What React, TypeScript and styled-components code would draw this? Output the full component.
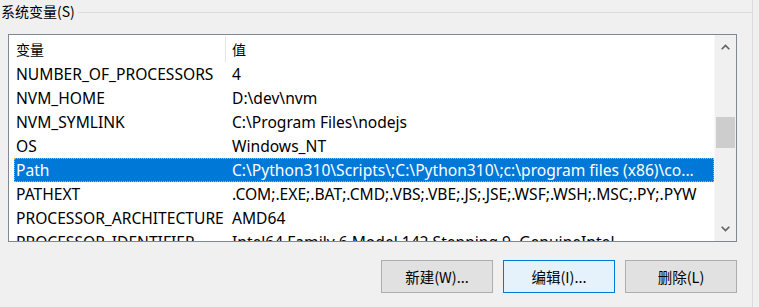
import React from 'react'
import styled, { createGlobalStyle } from 'styled-components'

const GlobalStyle = createGlobalStyle`
    html, body {
        margin: 0;
        padding: 0;
        background: #f0f0f0;
    }
    body {
        font-family: "Segoe UI", "Noto Sans", "Noto Sans CJK SC", sans-serif;
        color: #000;
    }
`

const SPage = styled.div`
    width: 759px;
    height: 307px;
    overflow: hidden;
    background: #f0f0f0;
`

const SGroup = styled.div`
    width: 753px;
    height: 307px;
    border-right: 1px solid #dcdcdc;
    box-sizing: border-box;
`

const STitleRow = styled.div`
    display: flex;
    align-items: center;
    height: 24px;
`

const STitle = styled.span`
    font-family: "Noto Sans CJK SC", sans-serif;
    font-size: 14px;
    line-height: 24px;
    padding: 0 3px 0 1px;
    margin-top: -2px;
`

const STitleLine = styled.div`
    flex: 1;
    height: 1px;
    background: #dcdcdc;
    margin-top: 1px;
`

const SListBox = styled.div`
    margin: 10px 0 0 8px;
    width: 729px;
    height: 208px;
    border: 1px solid #828790;
    box-sizing: border-box;
    background: #fff;
    display: flex;
    overflow: hidden;
`

const SListBody = styled.div`
    flex: 1;
    overflow: hidden;
    display: flex;
    flex-direction: column;
`

const SHeader = styled.div`
    display: flex;
    height: 27px;
    flex-shrink: 0;
    padding-left: 5px;
`

const SHeaderCell = styled.div<{ $width?: number }>`
    ${p => (p.$width ? `width: ${p.$width}px;` : 'flex: 1;')}
    box-sizing: border-box;
    padding-left: ${p => (p.$width ? 2 : 6)}px;
    font-family: "Noto Sans CJK SC", sans-serif;
    font-size: 14px;
    line-height: 27px;
    border-right: ${p => (p.$width ? '1px solid #e5e5e5' : 'none')};
    margin: 1px 0 0;
`

const SRow = styled.div<{ $selected?: boolean }>`
    display: flex;
    height: 24px;
    flex-shrink: 0;
    margin-left: 5px;
    box-sizing: border-box;
    background: ${p => (p.$selected ? '#0078d7' : 'transparent')};
    color: ${p => (p.$selected ? '#fff' : '#000')};
    border: 1px dotted ${p => (p.$selected ? '#f2a33a' : 'transparent')};
    font-family: "Segoe UI", "Noto Sans", sans-serif;
    font-size: 15.6px;
    line-height: 22px;
    white-space: nowrap;
`

const SCell = styled.div<{ $width?: number }>`
    ${p => (p.$width ? `width: ${p.$width}px;` : 'flex: 1;')}
    padding-left: ${p => (p.$width ? 1 : 6)}px;
    box-sizing: border-box;
    overflow: hidden;
`

const SScrollbar = styled.div`
    width: 21px;
    flex-shrink: 0;
    background: #f0f0f0;
    border-left: 1px solid #f7f7f7;
    display: flex;
    flex-direction: column;
    align-items: center;
`

const SArrow = styled.div`
    height: 24px;
    width: 100%;
    display: flex;
    align-items: center;
    justify-content: center;
`

const STrack = styled.div`
    flex: 1;
    width: 100%;
    padding-top: 58px;
    box-sizing: border-box;
`

const SThumb = styled.div`
    width: 19px;
    height: 31px;
    margin-left: 1px;
    background: #cdcdcd;
`

const SButtonRow = styled.div`
    display: flex;
    justify-content: flex-end;
    gap: 10px;
    width: 737px;
    margin-top: 18px;
`

const SButton = styled.button<{ $focused?: boolean }>`
    width: 112px;
    height: 33px;
    box-sizing: border-box;
    background: ${p => (p.$focused ? '#e5f1fb' : '#e1e1e1')};
    border: 1px solid ${p => (p.$focused ? '#0078d7' : '#adadad')};
    font-family: "Noto Sans CJK SC", sans-serif;
    font-size: 14.5px;
    color: #000;
    padding: 0;
    border-radius: 0;
`

const Chevron = ({ up }: { up?: boolean }) => (
    <svg width="9" height="6" viewBox="0 0 9 6">
        <path
            d={up ? 'M0.7 5.3 L4.5 1.5 L8.3 5.3' : 'M0.7 0.7 L4.5 4.5 L8.3 0.7'}
            stroke="#606060"
            strokeWidth="1.6"
            fill="none"
        />
    </svg>
)

const rows = [
    { name: 'NUMBER_OF_PROCESSORS', value: '4' },
    { name: 'NVM_HOME', value: 'D:\\dev\\nvm' },
    { name: 'NVM_SYMLINK', value: 'C:\\Program Files\\nodejs' },
    { name: 'OS', value: 'Windows_NT' },
    { name: 'Path', value: 'C:\\Python310\\Scripts\\;C:\\Python310\\;c:\\program files (x86)\\co...', selected: true },
    { name: 'PATHEXT', value: '.COM;.EXE;.BAT;.CMD;.VBS;.VBE;.JS;.JSE;.WSF;.WSH;.MSC;.PY;.PYW' },
    { name: 'PROCESSOR_ARCHITECTURE', value: 'AMD64' },
    { name: 'PROCESSOR_IDENTIFIER', value: 'Intel64 Family 6 Model 142 Stepping 9, GenuineIntel' },
]

const App = () => {
    return (
        <SPage>
            <GlobalStyle />
            <SGroup>
                <STitleRow>
                    <STitle>系统变量(S)</STitle>
                    <STitleLine />
                </STitleRow>
                <SListBox>
                    <SListBody>
                        <SHeader>
                            <SHeaderCell $width={212}>变量</SHeaderCell>
                            <SHeaderCell>值</SHeaderCell>
                        </SHeader>
                        {rows.map(r => (
                            <SRow key={r.name} $selected={r.selected}>
                                <SCell $width={211}>{r.name}</SCell>
                                <SCell>{r.value}</SCell>
                            </SRow>
                        ))}
                    </SListBody>
                    <SScrollbar>
                        <SArrow><Chevron up /></SArrow>
                        <STrack><SThumb /></STrack>
                        <SArrow><Chevron /></SArrow>
                    </SScrollbar>
                </SListBox>
                <SButtonRow>
                    <SButton>新建(W)...</SButton>
                    <SButton $focused>编辑(I)...</SButton>
                    <SButton>删除(L)</SButton>
                </SButtonRow>
            </SGroup>
        </SPage>
    )
}

export default App
